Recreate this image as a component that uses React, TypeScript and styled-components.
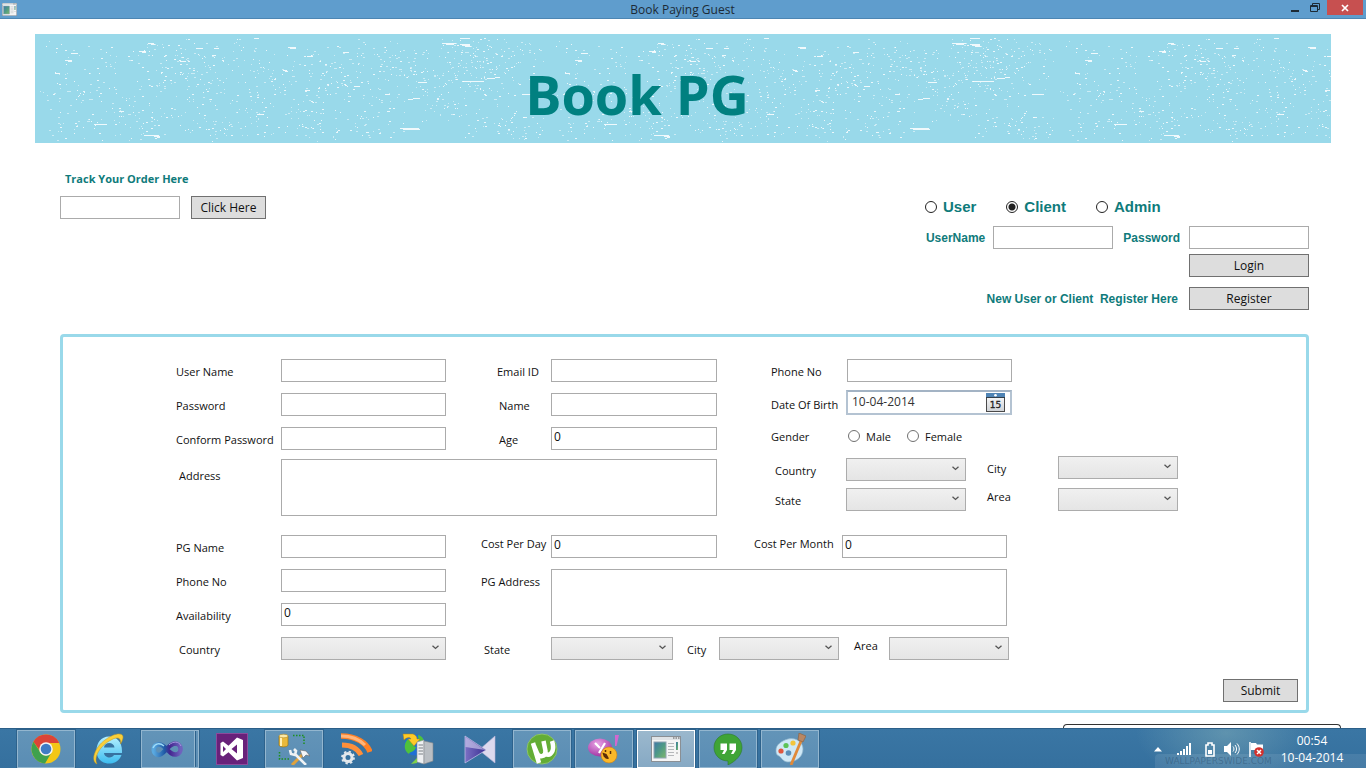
import React from "react";
import styled, { createGlobalStyle, css } from "styled-components";

const GlobalStyle = createGlobalStyle`
  *, *::before, *::after { box-sizing: border-box; }
  body {
    margin: 0;
    background: #fff;
    color: #111;
    font-family: "Open Sans", "Noto Sans", sans-serif;
    font-size: 12px;
  }
  input, textarea, select, button { font: inherit; color: inherit; margin: 0; border-radius: 0; }
`;

const teal = "#0f7b7b";
const sky = "#99d9ea";
const fieldBorder = "#ababab";

/* ---------- window frame ---------- */

const Window = styled.div`
  display: flex;
  flex-direction: column;
  min-height: 100vh;
`;

const TitleBar = styled.header`
  display: grid;
  grid-template-columns: 1fr auto 1fr;
  height: 19px;
  background: #5f9dcd;
  border-bottom: 1px solid #4d86b3;
  padding: 0 3px 0 2px;
`;

const WindowTitle = styled.h1`
  margin: 0;
  font-size: 12px;
  font-weight: 400;
  line-height: 19px;
  color: #1c2a36;
`;

const TitleIcon = styled.span`
  display: flex;
  align-items: center;
`;

const WindowControls = styled.div`
  display: flex;
  justify-content: flex-end;
  align-items: flex-start;
`;

const WindowButton = styled.button<{ $close?: boolean }>`
  display: flex;
  align-items: center;
  justify-content: center;
  width: ${(p) => (p.$close ? 36 : 20)}px;
  height: 15px;
  padding: 0;
  border: 0;
  background: ${(p) => (p.$close ? "#c75050" : "transparent")};
  ${(p) => p.$close && css`margin-left: 2px;`}
`;

/* ---------- banner ---------- */

const Banner = styled.div`
  display: grid;
  height: 109px;
  margin: 15px 35px 0;
  background: ${sky};
`;

const BannerTexture = styled.svg`
  grid-area: 1 / 1;
  width: 100%;
  height: 109px;
`;

const BannerTitle = styled.h2`
  grid-area: 1 / 1;
  place-self: center;
  margin: 0;
  padding: 10px 92px 0 0;
  font-size: 54px;
  font-weight: 700;
  line-height: 64px;
  color: #008080;
`;

/* ---------- page body ---------- */

const Page = styled.main`
  flex: 1;
  display: flex;
  flex-direction: column;
  padding: 28px 57px 0 60px;
`;

const AccountBar = styled.section`
  display: flex;
  flex-wrap: wrap;
  justify-content: space-between;
`;

const TrackForm = styled.form`
  display: flex;
  flex-direction: column;
  gap: 9px;
`;

const TrackLabel = styled.label`
  padding-left: 5px;
  font-size: 11px;
  font-weight: 700;
  line-height: 16px;
  color: ${teal};
`;

const Inline = styled.div<{ $gap: number }>`
  display: flex;
  align-items: center;
  gap: ${(p) => p.$gap}px;
`;

const LoginForm = styled.form`
  display: flex;
  flex-direction: column;
  align-items: flex-end;
  width: 384px;
  padding-top: 27px;
`;

const RoleRow = styled.div`
  display: flex;
  align-self: stretch;
  gap: 30px;
  margin-bottom: 10px;
`;

const RoleLabel = styled.label`
  display: flex;
  align-items: center;
  gap: 6px;
  font-family: "Liberation Sans", Arial, sans-serif;
  font-size: 15px;
  font-weight: 700;
  line-height: 18px;
  color: ${teal};
`;

const LoginLabel = styled.label`
  font-family: "Liberation Sans", Arial, sans-serif;
  font-weight: 700;
  color: ${teal};
  white-space: pre;
`;

const LoginRow = styled.div<{ $top?: number }>`
  display: flex;
  align-items: center;
  margin-top: ${(p) => p.$top ?? 0}px;
`;

const Spacer = styled.span<{ $w: number }>`
  width: ${(p) => p.$w}px;
`;

const Radio = styled.input.attrs({ type: "radio" })<{ $dark?: boolean }>`
  appearance: none;
  flex: none;
  width: 12px;
  height: 12px;
  border: 1px solid ${(p) => (p.$dark ? "#222" : "#707070")};
  border-radius: 50%;
  background: #fff;
  &:checked {
    background: radial-gradient(circle, #222 3px, #fff 4px);
  }
`;

const TextInput = styled.input<{ $w: number }>`
  flex: none;
  width: ${(p) => p.$w}px;
  height: 23px;
  padding: 0 2px 5px;
  border: 1px solid ${fieldBorder};
  background: #fff;
`;

const TextBox = styled.textarea`
  display: block;
  flex: 1;
  min-width: 0;
  height: 57px;
  padding: 1px 2px;
  border: 1px solid ${fieldBorder};
  background: #fff;
  resize: none;
`;

const Button = styled.button<{ $w: number }>`
  width: ${(p) => p.$w}px;
  height: 23px;
  padding: 0;
  border: 1px solid #707070;
  background: #ddd;
  line-height: 20px;
`;

/* ---------- registration form ---------- */

const Panel = styled.form`
  display: flex;
  flex-direction: column;
  gap: 19px;
  margin-top: 24px;
  padding: 22px 8px 8px 112px;
  border: 3px solid ${sky};
  border-radius: 4px;
`;

const Section = styled.div<{ $gap: number }>`
  display: flex;
  flex-wrap: wrap;
  column-gap: ${(p) => p.$gap}px;
`;

const Stack = styled.div<{ $gap: number }>`
  display: flex;
  flex-direction: column;
  gap: ${(p) => p.$gap}px;
`;

const Row = styled.div<{ $gap?: number }>`
  display: flex;
  column-gap: ${(p) => p.$gap ?? 0}px;
`;

const Field = styled.div`
  display: flex;
`;

const Label = styled.label<{ $w: number; $high?: boolean; $indent?: number }>`
  flex: none;
  width: ${(p) => p.$w}px;
  padding-left: ${(p) => (p.$indent ?? 0) + 1}px;
  padding-top: ${(p) => (p.$high ? 0 : 4)}px;
  font-size: 11px;
  line-height: 18px;
  white-space: nowrap;
`;

const AddressLabel = styled(Label)`
  padding-top: 8px;
`;

const DateLabel = styled(Label)`
  padding-top: 6px;
`;

const SelectBox = styled.span<{ $w: number }>`
  position: relative;
  display: block;
  width: ${(p) => p.$w}px;
  height: 23px;
  svg {
    position: absolute;
    top: 8px;
    right: 7px;
    pointer-events: none;
  }
`;

const Select = styled.select`
  appearance: none;
  display: block;
  width: 100%;
  height: 100%;
  padding: 0 20px 0 4px;
  border: 1px solid #acacac;
  background: linear-gradient(#f0f0f0, #e5e5e5);
`;

const DateBox = styled.div`
  display: flex;
  width: 166px;
  height: 25px;
  border: 2px solid #b4c3d2;
  border-top-color: #a3b3c4;
  background: #fff;
`;

const DateInput = styled.input`
  flex: 1;
  min-width: 0;
  padding: 0 4px 2px;
  border: 0;
  background: none;
  color: #333;
`;

const CalendarButton = styled.button`
  display: flex;
  width: 20px;
  margin-right: 4px;
  padding: 0;
  border: 0;
  background: none;
`;

const GenderRow = styled.div`
  display: flex;
  align-items: center;
  height: 16px;
  margin: 5px 0 4px;
  font-size: 11px;
`;

const GenderLabel = styled.label`
  display: flex;
  align-items: center;
  gap: 6px;
  margin-right: 16px;
`;

const GenderCaption = styled.span`
  width: 78px;
  padding-left: 1px;
`;

const Locations = styled.div`
  display: flex;
  align-items: flex-end;
  gap: 20px;
`;

const SubmitRow = styled.div`
  display: flex;
  justify-content: flex-end;
`;

const DockedEdge = styled.div`
  align-self: flex-end;
  width: 278px;
  height: 4px;
  margin: auto 25px 0 0;
  border: 1px solid #333;
  border-bottom: 0;
  border-radius: 4px 4px 0 0;
`;

/* ---------- taskbar ---------- */

const Taskbar = styled.footer`
  position: relative;
  display: flex;
  align-items: flex-start;
  height: 40px;
  padding: 1px 12px 0 17px;
  border-top: 1px solid #2c5f88;
  background:
    radial-gradient(ellipse 90px 50px at calc(100% - 140px) 4px, rgba(150, 190, 190, 0.4), transparent),
    linear-gradient(#3a76a4, #35709e);
`;

const Tasks = styled.nav`
  display: flex;
  gap: 4px;
`;

const Task = styled.button<{ $state?: "open" | "stacked" | "active" }>`
  display: flex;
  align-items: center;
  justify-content: center;
  width: 58px;
  height: 38px;
  padding: 0;
  border: 1px solid transparent;
  background: transparent;
  ${(p) =>
    p.$state &&
    css`
      border-color: #93b6cf;
      background: linear-gradient(#6394b8, #5a8db4);
      outline: 1px solid #2d628c;
    `}
  ${(p) =>
    p.$state === "stacked" &&
    css`
      padding-right: 6px;
      background:
        linear-gradient(90deg, transparent 52px, #93b6cf 52px, #93b6cf 53px, #2d628c 53px, #2d628c 54px, transparent 54px),
        linear-gradient(#6394b8, #5a8db4);
    `}
  ${(p) =>
    p.$state === "active" &&
    css`
      border-color: #fff;
      background: linear-gradient(#9bb8cd, #86a9c4);
    `}
`;

const Tray = styled.div`
  position: relative;
  display: flex;
  align-items: center;
  height: 38px;
  margin-left: auto;
  color: #fff;
`;

const TrayButton = styled.button<{ $w: number }>`
  display: flex;
  align-items: center;
  justify-content: center;
  width: ${(p) => p.$w}px;
  height: 20px;
  padding: 0;
  border: 0;
  background: none;
`;

const Clock = styled.time`
  display: block;
  width: 84px;
  text-align: center;
  line-height: 17px;
`;

const Watermark = styled.span`
  position: absolute;
  right: 0;
  bottom: 0;
  width: 211px;
  height: 14px;
  padding-left: 10px;
  overflow: hidden;
  border-top-left-radius: 4px;
  background: rgba(255, 255, 255, 0.09);
  font-family: "DejaVu Sans", sans-serif;
  font-size: 9px;
  line-height: 14px;
  color: rgba(20, 50, 80, 0.3);
`;

/* ---------- drawings ---------- */

/* Scattered flecks for one 510px wide tile of the banner. */
function makeFlecks() {
  let seed = 20140410;
  const rnd = () => {
    seed = (seed * 1664525 + 1013904223) % 4294967296;
    return seed / 4294967296;
  };
  const soft: string[] = [];
  const hard: string[] = [];
  for (let c = 0; c < 230; c++) {
    const cx = rnd() * 500 + 5;
    const cy = rnd() * 100 + 4;
    const n = 2 + Math.floor(rnd() * 7);
    for (let i = 0; i < n; i++) {
      const x = Math.round(cx + (rnd() - 0.5) * 40);
      const y = Math.round(cy + (rnd() - 0.5) * 24);
      if (y < 4 || y > 107 || x < 3 || x > 508) continue;
      const w = rnd() < 0.4 ? 2 : 1;
      (rnd() < 0.4 ? hard : soft).push(`M${x} ${y}h${w}v1h-${w}z`);
    }
  }
  return { soft: soft.join(""), hard: hard.join("") };
}
const flecks = makeFlecks();

const streaks: [number, number, number][] = [
  [113, 9, 6], [116, 10, 4], [104, 17, 7], [107, 18, 4], [36, 19, 7], [30, 26, 7], [33, 27, 4], [20, 39, 5],
  [179, 14, 5], [161, 14, 7], [253, 13, 8], [255, 14, 6], [248, 36, 4], [250, 37, 3], [59, 90, 13], [109, 101, 15],
  [119, 102, 6], [122, 103, 3], [365, 94, 19], [368, 95, 17], [407, 9, 14], [411, 10, 8], [383, 48, 9],
  [319, 52, 6], [378, 64, 7], [373, 65, 5], [222, 80, 7], [308, 18, 6], [272, 22, 6], [428, 47, 21],
  [452, 44, 8], [460, 43, 5], [487, 60, 10], [425, 10, 10], [427, 11, 8], [430, 12, 6], [425, 4, 10],
  [177, 21, 4], [145, 27, 6], [270, 56, 5], [350, 60, 5], [84, 77, 5], [220, 4, 4],
];

const BannerArt = () => (
  <BannerTexture aria-hidden="true">
    <defs>
      <pattern id="flecks" width="510" height="109" patternUnits="userSpaceOnUse">
        <path d={flecks.soft} fill="#fff" opacity=".5" />
        <path d={flecks.hard} fill="#fff" opacity=".8" />
        {streaks.map(([x, y, w], i) => (
          <rect key={i} x={x} y={y} width={w} height="1" fill="#fff" opacity=".85" />
        ))}
      </pattern>
    </defs>
    <rect width="100%" height="100%" fill="url(#flecks)" />
  </BannerTexture>
);

const Chevron = () => (
  <svg width="7" height="5" viewBox="0 0 7 5" fill="none" stroke="#555" strokeWidth="1.3" aria-hidden="true">
    <path d="M.5.7 3.5 3.4 6.5.7" />
  </svg>
);

const AppGlyph = ({ w, h }: { w: number; h: number }) => (
  <svg width={w} height={h} viewBox="0 0 30 26" aria-hidden="true">
    <defs>
      <linearGradient id="screen" x1="0" y1="0" x2="1" y2="1">
        <stop offset="0" stopColor="#3f78a8" />
        <stop offset=".5" stopColor="#4f9a86" />
        <stop offset="1" stopColor="#7fb86a" />
      </linearGradient>
    </defs>
    <rect x=".5" y=".5" width="29" height="25" fill="#f5f5f5" stroke="#8a8f94" />
    <rect x="1" y="1" width="28" height="3" fill="#dfe3e6" />
    <path d="M22 2h1.500M24.500 2H26M27 2h1.500" stroke="#555" />
    <rect x="3" y="6" width="12" height="16" fill="url(#screen)" stroke="#8fa4b4" />
    <path d="M17 7.500h6M17 10.500h6M17 13.500h6M17 16.500h6M17 19.500h6" stroke="#b5b8bb" />
    <rect x="25" y="6" width="2" height="8" fill="url(#screen)" />
    <path d="M25 17h2" stroke="#999" />
  </svg>
);

const Calendar = () => (
  <svg width="20" height="20" viewBox="0 0 20 20" aria-hidden="true">
    <defs>
      <linearGradient id="paper" x1="0" y1="0" x2="0" y2="1">
        <stop offset="0" stopColor="#fff" />
        <stop offset="1" stopColor="#cfd2d6" />
      </linearGradient>
    </defs>
    <rect x=".5" y="1.500" width="18" height="18" fill="url(#paper)" stroke="#4a4a4a" />
    <rect x="0" y="1" width="19" height="4" fill="#4f84b5" />
    <rect x="0" y="5" width="19" height="1" fill="#333f4a" />
    <circle cx="9.500" cy="3.300" r="1.300" fill="#fff" />
    <text x="9.500" y="16" textAnchor="middle" fontFamily="DejaVu Sans, sans-serif" fontSize="9" fill="#222" stroke="#222" strokeWidth=".3">15</text>
  </svg>
);

const Icon = ({ children }: { children: React.ReactNode }) => (
  <svg width="32" height="32" viewBox="0 0 32 32" aria-hidden="true">{children}</svg>
);

const Chrome = () => (
  <Icon>
    <circle cx="16" cy="16" r="14.500" fill="#f3c716" />
    <path d="M3.440 8.750A14.500 14.500 0 0 1 28.560 8.750L29 10H16A6 6 0 0 0 10.500 18.500Z" fill="#dc4437" />
    <path d="M3.440 8.750A14.500 14.500 0 0 0 15 30.500L21.500 19.500A6.500 6.500 0 0 1 10.300 19Z" fill="#3fa14d" />
    <circle cx="16" cy="16" r="6.800" fill="#f4f4f4" />
    <circle cx="16" cy="16" r="5.300" fill="#3f7cc4" />
  </Icon>
);

const Explorer = () => (
  <Icon>
    <defs>
      <linearGradient id="ieBlue" x1="0" y1="0" x2="0" y2="1">
        <stop offset="0" stopColor="#b5f0ff" />
        <stop offset="1" stopColor="#3cbcf0" />
      </linearGradient>
    </defs>
    <path d="M17 3.500C25 3.500 30 9 30 18V20H12C12.500 25 20 26 22 22H29.500C27.500 28 22.500 30.500 17 30.500 9 30.500 4.500 25 4.500 17.500S9 3.500 17 3.500ZM12 14.500H22.500C22 8.500 12.500 8.500 12 14.500Z" fillRule="evenodd" fill="url(#ieBlue)" />
    <path d="M5 31C-2 28 3 14 13 7 22 0 31-1 31 4 31 7 28.500 11 28.500 11 29.500 5 26 3 19 7 9 12 1 24 5 31Z" fill="#f9cf3a" stroke="#c99a1c" strokeWidth=".5" />
  </Icon>
);

const Blend = () => (
  <Icon>
    <defs>
      <linearGradient id="loop" x1="0" y1="0" x2="1" y2="0">
        <stop offset="0" stopColor="#5aa9e0" />
        <stop offset=".4" stopColor="#1f5aa6" />
        <stop offset=".6" stopColor="#43258f" />
        <stop offset="1" stopColor="#6f63bd" />
      </linearGradient>
    </defs>
    <path d="M16 16.500C12 12 9.500 11 7 11.500 1 13 1.500 21.500 7.500 22 12.500 22.500 17 11 24 10.500 31 10.500 31.500 20.500 25 21.500 21.500 22 19 19.500 16 16.500Z" fill="none" stroke="url(#loop)" strokeWidth="4.500" />
    <path d="M2 15C4 10 9 9.500 13 13" fill="none" stroke="#9fdcf8" strokeWidth="1.300" />
    <path d="M18 12C22 8 28 8 30 13" fill="none" stroke="#a69be0" strokeWidth="1" />
  </Icon>
);

const VisualStudio = () => (
  <Icon>
    <rect x=".5" y=".5" width="31" height="31" fill="#68217a" stroke="#8c4a9c" />
    <path fillRule="evenodd" d="M21 4.500 27 7V25L21 27.500 12.500 19.300 7 23.500 4.500 22V10L7 8.500 12.500 12.700ZM21 11.500 15.500 16 21 20.500ZM7 13V19L10 16Z" fill="#fff" />
  </Icon>
);

const Tools = () => (
  <Icon>
    <path d="M1 3V12C1 14.500 10 14.500 10 12V3Z" fill="#e9b93c" stroke="#9c7514" strokeWidth=".7" />
    <path d="M3 4V13" stroke="#fff0b8" strokeWidth="2" />
    <ellipse cx="5.500" cy="3" rx="4.500" ry="1.800" fill="#fbe9a6" stroke="#b58b24" strokeWidth=".6" />
    <path d="M15 2.500H26V12M1.500 19V26H12" fill="none" stroke="#1f8f1f" strokeWidth="1.500" strokeDasharray="1.500 1.500" />
    <path d="M14 32 25 21" stroke="#e0a23c" strokeWidth="3" />
    <path d="M22 17 28 18 32 23 28 22 25 25Z" fill="#f5f7f8" stroke="#666" strokeWidth=".6" />
    <path d="M28 32 17 21M12 17 13 21 17 22 18 18 16 16" fill="none" stroke="#eef2f4" strokeWidth="2.600" />
  </Icon>
);

const Feed = () => (
  <Icon>
    <path d="M1 3C16 3 27 10 30 19" fill="none" stroke="#ff8126" strokeWidth="5.500" />
    <path d="M1 3C12 3 20 7 25 12" fill="none" stroke="#ffb67c" strokeWidth="3" />
    <path d="M2 12C11 12 18 16 21 22" fill="none" stroke="#ff8f3a" strokeWidth="5" />
    <circle cx="8" cy="24.500" r="4" fill="none" stroke="#e3e8ec" strokeWidth="3" />
    <circle cx="8" cy="24.500" r="6" fill="none" stroke="#e3e8ec" strokeWidth="1.800" strokeDasharray="2.300 2.400" />
  </Icon>
);

const WebServer = () => (
  <Icon>
    <circle cx="13" cy="12" r="10.500" fill="#1f6fd6" />
    <path d="M6 6C12 8 9 13 14 14 12 20 8 18 7 21 2 18 1 11 6 6ZM16 2C21 3 23 8 22 12L17 10Z" fill="#4fc23c" />
    <path d="M1 1 11 1C14 2 15 4 15 6L18 6 12 13 6 6 9 6C8 4 5 4 2 7Z" fill="#ffca28" stroke="#b58412" strokeWidth=".5" />
    <path d="M15 9 22 7V31L15 29Z" fill="#eef0f2" stroke="#8a8f94" strokeWidth=".6" />
    <path d="M22 8 31 10V28L22 31Z" fill="#b9bec3" stroke="#82878c" strokeWidth=".6" />
    <path d="M16.500 12H21M16.500 15H21M16.500 18H21M16.500 21H21" stroke="#7b8085" />
    <path d="M9 31 15 25V30Z" fill="#7fd04a" />
  </Icon>
);

const Player = () => (
  <Icon>
    <defs>
      <linearGradient id="kmLeft" x1="0" y1="0" x2="1" y2="0">
        <stop offset="0" stopColor="#7b70c4" />
        <stop offset="1" stopColor="#3b2f93" />
      </linearGradient>
    </defs>
    <path d="M31 3V30L15 17Z" fill="#dcd9ee" stroke="#b8b3d8" strokeWidth=".6" />
    <path d="M1 3 22 17 1 30Z" fill="url(#kmLeft)" stroke="#c9c4e8" strokeWidth=".7" />
    <path d="M1.500 4 21 17 1.500 14Z" fill="#d9d5f1" opacity=".6" />
  </Icon>
);

const Torrent = () => (
  <Icon>
    <circle cx="16" cy="16" r="15" fill="#63ad35" stroke="#8cc46a" />
    <path d="M7 10 13 30M8 13 11 20C12.500 25 20 24 19.500 18L17.500 8M19 18C20 23 24 23 26.500 18 28 14 26 8 26 8" fill="none" stroke="#fff" strokeWidth="4.500" />
  </Icon>
);

const Messenger = () => (
  <Icon>
    <defs>
      <radialGradient id="bubble" cx=".4" cy=".3" r=".8">
        <stop offset="0" stopColor="#e9a4e6" />
        <stop offset="1" stopColor="#99279b" />
      </radialGradient>
    </defs>
    <ellipse cx="12" cy="14.500" rx="12" ry="9" fill="url(#bubble)" />
    <path d="M7 10 12 15M17 10 11 20" stroke="#fff" strokeWidth="2.200" />
    <path d="M27 2 31 2 28.500 13H27Z" fill="#d268cf" />
    <circle cx="21" cy="22" r="8" fill="#fbb829" stroke="#c98218" strokeWidth=".6" />
    <path d="M14.500 19.500C15 24 18 27 21 25.500L18.500 21Z" fill="#5b2d08" />
    <path d="M17.500 17v2M22.500 18v3" stroke="#5b2d08" strokeWidth="1.500" />
  </Icon>
);

const Hangouts = () => (
  <Icon>
    <path d="M16 1C8 1 2 7 2 14.500S8 28 16 28V32C24 28 30 22 30 14.500S24 1 16 1Z" fill="#3fa436" stroke="#2c7a2a" strokeWidth=".6" />
    <path d="M8.500 10.500H15V17L12.500 21H10L12 17H8.500ZM17.500 10.500H24V17L21.500 21H19L21 17H17.500Z" fill="#fff" />
  </Icon>
);

const Paint = () => (
  <Icon>
    <path d="M14 6C23 4 29 10 29 16 29 24 22 29 14 29 9 29 7 24 5 23 2 22 2 19 2 17 2 12 7 8 14 6Z" fill="#cfe8f6" stroke="#8fb4cc" strokeWidth=".7" />
    <circle cx="14.500" cy="20" r="2.800" fill="#5b8fb8" />
    <circle cx="7" cy="18" r="2.600" fill="#e0573f" />
    <circle cx="12" cy="12.500" r="2.600" fill="#5ec357" />
    <circle cx="19" cy="10" r="2.600" fill="#f3c53c" />
    <path d="M17 32 27 8" stroke="#e08a3a" strokeWidth="2.800" />
    <path d="M24 7 25 0 32 3 29 9Z" fill="#b98763" stroke="#8c5e3d" strokeWidth=".6" />
  </Icon>
);

/* ---------- reusable parts ---------- */

const DropDown = ({ id, w }: { id: string; w: number }) => (
  <SelectBox $w={w}>
    <Select id={id} defaultValue=""><option value="" /></Select>
    <Chevron />
  </SelectBox>
);

type FieldProps = { id: string; label: string; lw: number; w: number; high?: boolean; indent?: number };

const TextField = ({ id, label, lw, w, high, indent, value, type }: FieldProps & { value?: string; type?: string }) => (
  <Field>
    <Label htmlFor={id} $w={lw} $high={high} $indent={indent}>{label}</Label>
    <TextInput id={id} type={type ?? "text"} $w={w} defaultValue={value} />
  </Field>
);

const SelectField = ({ id, label, lw, w, high, indent }: FieldProps) => (
  <Field>
    <Label htmlFor={id} $w={lw} $high={high} $indent={indent}>{label}</Label>
    <DropDown id={id} w={w} />
  </Field>
);

const TextBoxWide = styled(TextBox)`
  flex: none;
  width: 456px;
`;

const tasks: { name: string; art: React.ReactNode; state?: "open" | "stacked" | "active" }[] = [
  { name: "Chrome", art: <Chrome />, state: "open" },
  { name: "Internet Explorer", art: <Explorer /> },
  { name: "Blend", art: <Blend />, state: "stacked" },
  { name: "Visual Studio", art: <VisualStudio /> },
  { name: "SQL Tools", art: <Tools />, state: "open" },
  { name: "Feed", art: <Feed /> },
  { name: "Web Server", art: <WebServer /> },
  { name: "Player", art: <Player /> },
  { name: "Torrent", art: <Torrent />, state: "open" },
  { name: "Messenger", art: <Messenger />, state: "open" },
  { name: "Book Paying Guest", art: <AppGlyph w={30} h={26} />, state: "active" },
  { name: "Hangouts", art: <Hangouts />, state: "open" },
  { name: "Paint", art: <Paint />, state: "open" },
];

export default function App() {
  const stop = (e: React.FormEvent) => e.preventDefault();
  return (
    <Window>
      <GlobalStyle />
      <TitleBar>
        <TitleIcon><AppGlyph w={15} h={13} /></TitleIcon>
        <WindowTitle>Book Paying Guest</WindowTitle>
        <WindowControls>
          <WindowButton aria-label="Minimize">
            <svg width="8" height="10" viewBox="0 0 8 10"><path d="M0 7h8v2H0z" fill="#1d2a35" /></svg>
          </WindowButton>
          <WindowButton aria-label="Restore">
            <svg width="10" height="10" viewBox="0 0 10 10" fill="none" stroke="#1d2a35">
              <path d="M2.500 2V.5h7v6H8" /><path d="M.5 2.500h7v6h-7z" /><path d="M.5 3.500h7" />
            </svg>
          </WindowButton>
          <WindowButton $close aria-label="Close">
            <svg width="8" height="8" viewBox="0 0 8 8" stroke="#fff" strokeWidth="1.700"><path d="M1 1l6 6M7 1 1 7" /></svg>
          </WindowButton>
        </WindowControls>
      </TitleBar>

      <Banner>
        <BannerArt />
        <BannerTitle>Book PG</BannerTitle>
      </Banner>

      <Page>
        <AccountBar>
          <TrackForm onSubmit={stop}>
            <TrackLabel htmlFor="track">Track Your Order Here</TrackLabel>
            <Inline $gap={11}>
              <TextInput id="track" $w={120} />
              <Button $w={75}>Click Here</Button>
            </Inline>
          </TrackForm>

          <LoginForm onSubmit={stop}>
            <RoleRow>
              <RoleLabel><Radio name="role" $dark />User</RoleLabel>
              <RoleLabel><Radio name="role" $dark defaultChecked />Client</RoleLabel>
              <RoleLabel><Radio name="role" $dark />Admin</RoleLabel>
            </RoleRow>
            <LoginRow>
              <LoginLabel htmlFor="login-name">UserName</LoginLabel>
              <Spacer $w={8} />
              <TextInput id="login-name" $w={120} />
              <Spacer $w={10} />
              <LoginLabel htmlFor="login-pass">Password</LoginLabel>
              <Spacer $w={9} />
              <TextInput id="login-pass" type="password" $w={120} />
            </LoginRow>
            <LoginRow $top={5}>
              <Button $w={120}>Login</Button>
            </LoginRow>
            <LoginRow $top={10}>
              <LoginLabel as="span">{"New User or Client  Register Here"}</LoginLabel>
              <Spacer $w={11} />
              <Button $w={120} type="button">Register</Button>
            </LoginRow>
          </LoginForm>
        </AccountBar>

        <Panel onSubmit={stop}>
          <Section $gap={53}>
            <Stack $gap={9}>
              <Row $gap={50}>
                <Stack $gap={11}>
                  <TextField id="user" label="User Name" lw={106} w={165} />
                  <TextField id="pass" label="Password" lw={106} w={165} type="password" />
                  <TextField id="confirm" label="Conform Password" lw={106} w={165} type="password" />
                </Stack>
                <Stack $gap={11}>
                  <TextField id="email" label="Email ID" lw={55} w={166} />
                  <TextField id="name" label="Name" lw={55} w={166} indent={2} />
                  <TextField id="age" label="Age" lw={55} w={166} indent={2} value="0" />
                </Stack>
              </Row>
              <Field>
                <AddressLabel htmlFor="address" $w={106} $indent={3}>Address</AddressLabel>
                <TextBox id="address" />
              </Field>
            </Stack>

            <Stack $gap={8}>
              <TextField id="phone" label="Phone No" lw={77} w={165} />
              <Field>
                <DateLabel htmlFor="dob" $w={76}>Date Of Birth</DateLabel>
                <DateBox>
                  <DateInput id="dob" defaultValue="10-04-2014" />
                  <CalendarButton type="button" aria-label="Pick a date"><Calendar /></CalendarButton>
                </DateBox>
              </Field>
              <GenderRow>
                <GenderCaption>Gender</GenderCaption>
                <GenderLabel><Radio name="gender" />Male</GenderLabel>
                <GenderLabel><Radio name="gender" />Female</GenderLabel>
              </GenderRow>
              <Locations>
                <Stack $gap={7}>
                  <SelectField id="country" label="Country" lw={76} w={120} indent={4} />
                  <SelectField id="state" label="State" lw={76} w={120} indent={4} />
                </Stack>
                <Stack $gap={9}>
                  <SelectField id="city" label="City" lw={72} w={120} />
                  <SelectField id="area" label="Area" lw={72} w={120} high />
                </Stack>
              </Locations>
            </Stack>
          </Section>

          <Section $gap={34}>
            <Stack $gap={11}>
              <TextField id="pg-name" label="PG Name" lw={106} w={165} />
              <TextField id="pg-phone" label="Phone No" lw={106} w={165} />
              <TextField id="availability" label="Availability" lw={106} w={165} value="0" />
              <SelectField id="pg-country" label="Country" lw={106} w={165} indent={3} />
            </Stack>
            <Stack $gap={11}>
              <Row $gap={36}>
                <TextField id="day-cost" label="Cost Per Day" lw={71} w={166} high value="0" />
                <TextField id="month-cost" label="Cost Per Month" lw={89} w={165} high value="0" />
              </Row>
              <Field>
                <Label htmlFor="pg-address" $w={71}>PG Address</Label>
                <TextBoxWide id="pg-address" />
              </Field>
              <Row $gap={13}>
                <SelectField id="pg-state" label="State" lw={71} w={122} indent={3} />
                <SelectField id="pg-city" label="City" lw={33} w={120} />
                <SelectField id="pg-area" label="Area" lw={37} w={120} high indent={1} />
              </Row>
            </Stack>
          </Section>

          <SubmitRow>
            <Button $w={75}>Submit</Button>
          </SubmitRow>
        </Panel>
      </Page>
      <DockedEdge />

      <Taskbar>
        <Watermark aria-hidden="true">WALLPAPERSWIDE.COM</Watermark>
        <Tasks aria-label="Open programs">
          {tasks.map((t) => (
            <Task key={t.name} $state={t.state} aria-label={t.name}>{t.art}</Task>
          ))}
        </Tasks>
        <Tray>
          <TrayButton $w={22} aria-label="Show hidden icons">
            <svg width="8" height="5" viewBox="0 0 8 5"><path d="M4 0 8 4.500H0z" fill="#fff" /></svg>
          </TrayButton>
          <TrayButton $w={29} aria-label="Network">
            <svg width="16" height="13" viewBox="0 0 16 13" fill="#fff">
              <path d="M1 10h2v2H1zM4 8h2v4H4zM7 6h2v6H7zM10 3h2v9h-2zM13 0h2v12h-2z" />
            </svg>
          </TrayButton>
          <TrayButton $w={24} aria-label="Battery">
            <svg width="10" height="15" viewBox="0 0 10 15">
              <path d="M3 1h4v2h2v11H1V3h2z" fill="none" stroke="#fff" strokeWidth="1.600" /><path d="M3 8h4v4H3z" fill="#fff" />
            </svg>
          </TrayButton>
          <TrayButton $w={20} aria-label="Volume">
            <svg width="16" height="14" viewBox="0 0 16 14" fill="none" stroke="#fff">
              <path d="M0 4h3l4-4v14l-4-4H0z" fill="#fff" stroke="none" />
              <path d="M9 4.500c1.300 1.500 1.300 3.500 0 5M11 3c2 2.500 2 5.500 0 8M13 1.500c3 3.500 3 7.500 0 11" />
            </svg>
          </TrayButton>
          <TrayButton $w={28} aria-label="Action Center">
            <svg width="17" height="17" viewBox="0 0 17 17">
              <path d="M2 1v15" stroke="#fff" strokeWidth="1.600" />
              <path d="M3 2h5l1 1.500h6v7H9L8 9H3z" fill="#fff" />
              <circle cx="11" cy="11" r="4.800" fill="#d3312d" />
              <path d="m9 9 4 4M13 9l-4 4" stroke="#fff" strokeWidth="1.500" />
            </svg>
          </TrayButton>
          <Clock>00:54<br />10-04-2014</Clock>
        </Tray>
      </Taskbar>
    </Window>
  );
}
